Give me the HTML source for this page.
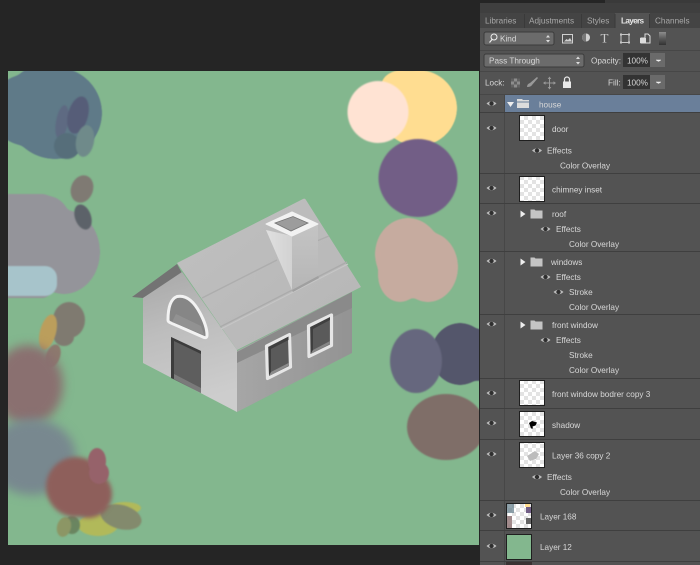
<!DOCTYPE html>
<html><head><meta charset="utf-8"><style>
html,body{margin:0;padding:0;background:#252525;width:700px;height:565px;overflow:hidden}
svg{display:block}
text{font-family:"Liberation Sans",sans-serif;font-size:8.2px;fill:#d8d8d8;filter:blur(.3px)}
</style></head><body>
<svg width="700" height="565" viewBox="0 0 700 565" xmlns="http://www.w3.org/2000/svg">
<defs>
<filter id="g" x="-20%" y="-20%" width="140%" height="140%" color-interpolation-filters="sRGB"><feGaussianBlur stdDeviation="2.500"/><feComponentTransfer><feFuncA type="linear" slope="20" intercept="-9.500"/></feComponentTransfer><feGaussianBlur stdDeviation=".5"/></filter>
<filter id="s" x="-30%" y="-30%" width="160%" height="160%" color-interpolation-filters="sRGB"><feGaussianBlur stdDeviation=".7"/></filter>
<filter id="b5" x="-40%" y="-40%" width="180%" height="180%" color-interpolation-filters="sRGB"><feGaussianBlur stdDeviation="5"/></filter>
<filter id="b2" x="-30%" y="-30%" width="160%" height="160%" color-interpolation-filters="sRGB"><feGaussianBlur stdDeviation="2.200"/></filter>
<filter id="t" color-interpolation-filters="sRGB"><feGaussianBlur stdDeviation="0.35"/></filter>
<clipPath id="c"><rect x="8" y="71" width="471" height="474"/></clipPath>
<pattern id="ck" width="8" height="8" patternUnits="userSpaceOnUse"><rect width="8" height="8" fill="#fff"/><rect width="4" height="4" fill="#e3e3e3"/><rect x="4" y="4" width="4" height="4" fill="#e3e3e3"/></pattern>
<linearGradient id="gw" x1="0" y1="0" x2="0.2" y2="1"><stop offset="0" stop-color="#a8a8a8"/><stop offset=".45" stop-color="#bdbdbd"/><stop offset="1" stop-color="#cdcdcd"/></linearGradient>
<linearGradient id="rw" x1="0" y1="0" x2="1" y2="0"><stop offset="0" stop-color="#a6a6a6"/><stop offset="1" stop-color="#939393"/></linearGradient>
<linearGradient id="rf" x1="0" y1="0" x2="1" y2="1"><stop offset="0" stop-color="#c0c0c0"/><stop offset="1" stop-color="#b6b6b6"/></linearGradient>
<linearGradient id="ch" x1="0" y1="0" x2="1" y2="0"><stop offset="0" stop-color="#e0e0e0"/><stop offset="1" stop-color="#d2d2d2"/></linearGradient>
<linearGradient id="ch2" x1="0" y1="0" x2="0" y2="1"><stop offset="0" stop-color="#c4c4c4"/><stop offset="1" stop-color="#b6b6b6"/></linearGradient>
<linearGradient id="sl" x1="0" y1="0" x2="0" y2="1"><stop offset="0" stop-color="#8d8d8d"/><stop offset=".5" stop-color="#5a5a5a"/><stop offset="1" stop-color="#333"/></linearGradient>
</defs>
<rect width="700" height="565" fill="#252525"/>
<rect x="8" y="71" width="471" height="474" fill="#83b78e"/>
<g clip-path="url(#c)">
<!-- upper left -->
<g filter="url(#g)" fill="#5f7a88"><ellipse cx="55" cy="113" rx="47" ry="46"/><ellipse cx="48" cy="90" rx="36" ry="26"/><ellipse cx="28" cy="110" rx="38" ry="36"/></g>
<g filter="url(#g)" fill="#94949a"><rect x="-30" y="194" width="80" height="104" rx="6"/><ellipse cx="64" cy="252" rx="36" ry="42"/><ellipse cx="48" cy="228" rx="24" ry="32"/></g>
<g filter="url(#s)">
<ellipse cx="62" cy="122" rx="6" ry="17" transform="rotate(10 62 122)" fill="#5e6a82"/>
<ellipse cx="67" cy="146" rx="13" ry="13" fill="#566e7a"/>
<ellipse cx="78" cy="115" rx="10" ry="19" transform="rotate(15 78 115)" fill="#565d78"/>
<ellipse cx="85" cy="141" rx="9" ry="16" transform="rotate(10 85 141)" fill="#6f8a8a"/>
<ellipse cx="82" cy="189" rx="11" ry="14" transform="rotate(20 82 189)" fill="#7f7a73"/>
<ellipse cx="83" cy="217" rx="8" ry="13" transform="rotate(-20 83 217)" fill="#5c6269"/>
</g>
<rect x="-30" y="266" width="87" height="30" rx="12" fill="#a7c4cb" filter="url(#s)"/>
<!-- right -->
<g filter="url(#g)" fill="#ffdd91"><ellipse cx="418" cy="108" rx="39" ry="38"/><ellipse cx="402" cy="86" rx="21" ry="16"/></g>
<ellipse cx="378" cy="112" rx="30.500" ry="31" fill="#ffe3d3" filter="url(#s)"/>
<ellipse cx="418" cy="178" rx="39.500" ry="39" fill="#725e86" filter="url(#s)"/>
<g filter="url(#g)" fill="#c6ab9f"><ellipse cx="408" cy="254" rx="33" ry="36"/><ellipse cx="428" cy="267" rx="30" ry="35"/><ellipse cx="400" cy="275" rx="22" ry="27"/></g>
<g filter="url(#g)" fill="#54566b"><ellipse cx="460" cy="354" rx="29" ry="31"/><ellipse cx="480" cy="355" rx="20" ry="26"/></g>
<ellipse cx="416" cy="361" rx="26" ry="32" fill="#66677e" filter="url(#s)"/>
<ellipse cx="446" cy="427" rx="39" ry="33" fill="#7f6e68" filter="url(#s)"/>
<!-- lower left -->
<g filter="url(#s)">
<ellipse cx="69" cy="320" rx="16" ry="18" fill="#7f7a70"/><ellipse cx="64" cy="337" rx="10" ry="9" fill="#7f7a70"/>
<ellipse cx="48" cy="332" rx="8" ry="18" transform="rotate(15 48 332)" fill="#bb9e5c"/>
<ellipse cx="53" cy="356" rx="7" ry="12" transform="rotate(20 53 356)" fill="#8d7a6e"/>
</g>
<ellipse cx="28" cy="385" rx="35" ry="40" fill="#8a7070" filter="url(#b5)"/>
<ellipse cx="32" cy="457" rx="44" ry="38" fill="#78888f" filter="url(#b5)"/>
<g filter="url(#s)">
<ellipse cx="98" cy="525" rx="20" ry="11" fill="#b1b95a"/><ellipse cx="125" cy="508" rx="16" ry="6" fill="#b1b95a"/>
<ellipse cx="121" cy="517" rx="21" ry="12" transform="rotate(15 121 517)" fill="#838a6d"/>
<ellipse cx="72" cy="525" rx="8" ry="9" fill="#6a8560"/>
<ellipse cx="64" cy="527" rx="7" ry="10" transform="rotate(15 64 527)" fill="#8c9665"/>
</g>
<g filter="url(#b2)" fill="#8e5f5b"><ellipse cx="76" cy="487" rx="30" ry="30"/><ellipse cx="88" cy="494" rx="24" ry="24"/></g>
<g filter="url(#s)" fill="#96626a"><ellipse cx="97" cy="461" rx="9" ry="13"/><ellipse cx="99" cy="473" rx="10" ry="11"/></g>
</g>

<!-- house -->
<g filter="url(#t)">
<path d="M132 297 L177 264 L182 273 L143 298Z" fill="#737373"/>
<path d="M143 298 L182 272 L237 350 L237 412 L143 363Z" fill="url(#gw)"/>
<path d="M237 351 L352 292 L352 353 L237 412Z" fill="url(#rw)"/>
<path d="M237 352 L352 292 L352 308 L237 363Z" fill="#8a8a8a"/>
<path d="M177 263 L303 199 Q305 198 306 200 L361 287 L237 350Z" fill="url(#rf)"/>
<path d="M202 298 L277 260 M312 243 L329 236" stroke="#adadad" stroke-width="1.400" fill="none"/>
<path d="M220 327 L347 262" stroke="#ababab" stroke-width="1.400" fill="none"/>
<path d="M221 329 L348 264" stroke="#c6c6c6" stroke-width="1" fill="none"/>
<path d="M266 230 L292 236 L292 290 Z" fill="url(#ch)"/>
<path d="M292 236 L318 224 L318 276 L292 290Z" fill="url(#ch2)"/>
<path d="M292 290 L318 276 L319 278 L293 292Z" fill="#a0a0a0"/>
<path d="M266 224 L292 212 L318 224 L292 236Z" fill="#f2f2f2" stroke="#f2f2f2" stroke-linejoin="round"/>
<path d="M275 223 L293 216.500 L308 223 L291 231Z" fill="#9c9c9c" stroke="#757575" stroke-width=".8"/>
<path d="M168 320 Q168 300 177 296.500 Q190 294 200 313 Q207 326 207 335 Q207 339 203 337 L171 323 Q168 322 168 320Z" fill="#868686" stroke="#f2f2f2" stroke-width="3" stroke-linejoin="round"/>
<path d="M172 322 L176 314 L201 326 L204 335Z" fill="#929292"/>
<path d="M171 337 L201 351 L201 393 L171 378Z" fill="#5e5e5e"/>
<path d="M171 337 L201 351 L201 354 L174 341 L174 379 L171 378Z" fill="#3c3c3c"/>
<path d="M174 374 L201 388 L201 393 L174 379Z" fill="#7a7a7a"/>
<path d="M266.500 346 L289.500 334.500 L290.500 367 L267.500 378.500Z" fill="#5a5a5a" stroke="#e6e6e6" stroke-width="3.200" stroke-linejoin="round"/>
<path d="M268.500 347 L288.500 336.500 L288.500 340 L271 349 L271 373 L269 375Z" fill="#3f3f3f"/>
<path d="M271 372 L288.500 363 L289 365.500 L269 376Z" fill="#8c8c8c"/>
<path d="M308.500 326 L331.500 315 L331.500 345.500 L309 356.500Z" fill="#5a5a5a" stroke="#e6e6e6" stroke-width="3.200" stroke-linejoin="round"/>
<path d="M310.500 327 L330 317 L330 320 L313 329 L313 352 L310.500 354Z" fill="#3f3f3f"/>
<path d="M313 350 L330 341 L330 344 L310.500 354Z" fill="#868686"/>
</g>

<!-- panel -->
<rect x="480" y="3" width="220" height="562" fill="#535353"/>
<rect x="480" y="3" width="220" height="10" fill="#3f3f3f"/>
<rect x="605" y="0" width="95" height="3" fill="#3a3a3a"/>
<rect x="480" y="13" width="220" height="15" fill="#444"/>
<rect x="615" y="13" width="35" height="15" fill="#535353"/>
<g stroke="#3a3a3a" stroke-width="1"><path d="M524.500 14V28M581.500 14V28M615 14V28M649.500 14V28"/></g>
<path d="M480 50.500H700M480 71.500H700M480 94.500H700" stroke="#474747"/>
<text x="485" y="23.500" style="fill:#a9a9a9">Libraries</text>
<text x="529" y="23.500" style="fill:#a9a9a9">Adjustments</text>
<text x="587" y="23.500" style="fill:#a9a9a9">Styles</text>
<text x="621" y="23.500" font-weight="bold" style="fill:#e6e6e6" textLength="23">Layers</text>
<text x="655" y="23.500" style="fill:#a9a9a9">Channels</text>
<!-- filter row -->
<rect x="484" y="32" width="70" height="13" rx="2" fill="#6b6b6b" stroke="#3b3b3b"/>
<circle cx="494" cy="37" r="3" fill="none" stroke="#eee" stroke-width="1"/><path d="M492 39.500L489.500 42.500" stroke="#eee" stroke-width="1.200"/>
<text x="500" y="41.500">Kind</text>
<path d="M546 37.500l2-2.500 2 2.500zM546 40l2 2.500 2-2.500z" fill="#ddd"/>
<rect x="562.500" y="34.500" width="10" height="8.500" fill="none" stroke="#d0d0d0"/><path d="M564 41.500l2.500-2.500 1.500 1 2-2 2 3.500z" fill="#d0d0d0"/>
<circle cx="586" cy="37.500" r="4" fill="#d0d0d0"/><path d="M586 41.500a4 4 0 0 1 0-8z" fill="#777"/>
<text x="600.500" y="42.500" style="font-family:'Liberation Serif',serif;font-size:13px;fill:#ccc">T</text>
<rect x="621" y="34.500" width="8" height="8" fill="none" stroke="#c8c8c8"/><path d="M620 33.500h2v2h-2zM628 33.500h2v2h-2zM620 41.500h2v2h-2zM628 41.500h2v2h-2z" fill="#c8c8c8"/>
<path d="M641 38h4v-4h3l2 2v7h-9z" fill="none" stroke="#ddd"/><rect x="640" y="38" width="6" height="5" fill="#ddd"/>
<rect x="659" y="32" width="7" height="13" fill="url(#sl)"/>
<!-- blend row -->
<rect x="484" y="54" width="100" height="13" rx="2" fill="#6b6b6b" stroke="#3b3b3b"/>
<text x="489" y="63.500">Pass Through</text>
<path d="M576 59l2-2.500 2 2.500zM576 62l2 2.500 2-2.500z" fill="#ddd"/>
<text x="591" y="63.500">Opacity:</text>
<rect x="623" y="53" width="27" height="14" fill="#333"/><rect x="650" y="53" width="15" height="14" fill="#6a6a6a"/>
<text x="627" y="63.500">100%</text><path d="M656 60h5l-2.500 1.500z" fill="#eee" stroke="#eee" stroke-width=".5"/>
<!-- lock row -->
<text x="485" y="85.500">Lock:</text>
<rect x="511" y="78.500" width="9" height="9" fill="#8c8c8c"/><path d="M511 78.500h3v3h-3zM517 78.500h3v3h-3zM514 81.500h3v3h-3zM511 84.500h3v3h-3zM517 84.500h3v3h-3z" fill="#626262"/>
<path d="M527 87q0-3 3-4l7-6 1 1-6 7q-1 2-5 2z" fill="#999"/>
<path d="M549.500 78v10M544.500 83h10" stroke="#999"/><path d="M549.500 76.500l1.800 2.500h-3.600zM549.500 89.500l1.800-2.500h-3.600zM543 83l2.500-1.800v3.600zM556 83l-2.500-1.800v3.600z" fill="#999"/>
<rect x="563" y="81.500" width="8" height="6.500" fill="#e8e8e8"/><path d="M564.500 82v-2.500a2.500 2.500 0 0 1 5 0V82" fill="none" stroke="#e8e8e8" stroke-width="1.200"/>
<text x="608" y="85.500">Fill:</text>
<rect x="623" y="75" width="27" height="14" fill="#333"/><rect x="650" y="75" width="15" height="14" fill="#6a6a6a"/>
<text x="627" y="85.500">100%</text><path d="M656 82h5l-2.500 1.500z" fill="#eee" stroke="#eee" stroke-width=".5"/>

<!-- layers -->
<rect x="504" y="95" width="196" height="17" fill="#6a7f9a"/>
<path d="M504.500 95V565" stroke="#474747"/>
<path d="M480 112.500H700M480 173.500H700M480 203.500H700M480 251.500H700M480 314.500H700M480 378.500H700M480 408.500H700M480 439.500H700M480 500.500H700M480 530.500H700M480 561.500H700" stroke="#3f3f3f"/>
<!-- eyes -->
<defs><g id="eye"><path d="M-5 0Q0-4.500 5 0Q0 4.500-5 0Z" fill="#bdbdbd"/><circle r="2.200" fill="#2f2f2f"/></g></defs>
<use href="#eye" x="491.500" y="103.500"/><use href="#eye" x="491.500" y="128"/><use href="#eye" x="491.500" y="188"/><use href="#eye" x="491.500" y="213"/><use href="#eye" x="491.500" y="261"/><use href="#eye" x="491.500" y="324"/><use href="#eye" x="491.500" y="393"/><use href="#eye" x="491.500" y="423"/><use href="#eye" x="491.500" y="454"/><use href="#eye" x="491.500" y="515"/><use href="#eye" x="491.500" y="546"/>
<use href="#eye" x="537" y="150.500"/><use href="#eye" x="545.500" y="229"/><use href="#eye" x="545.500" y="277"/><use href="#eye" x="558.500" y="292"/><use href="#eye" x="545.500" y="340"/><use href="#eye" x="537" y="477"/>
<!-- house folder -->
<path d="M507 102h7l-3.500 5z" fill="#eee"/>
<path d="M517 101v-2h5l1 1h6v8h-12z" fill="#dcdcdc"/><path d="M517 102h12" stroke="#6a7f9a"/>
<text x="539" y="107.500">house</text>
<!-- thumbs -->
<g stroke="#1f1f1f">
<rect x="519.500" y="115.500" width="25" height="25" fill="url(#ck)"/>
<rect x="519.500" y="176.500" width="25" height="25" fill="url(#ck)"/>
<rect x="519.500" y="380.500" width="25" height="25" fill="url(#ck)"/>
<rect x="519.500" y="411.500" width="25" height="25" fill="url(#ck)"/>
<rect x="519.500" y="442.500" width="25" height="25" fill="url(#ck)"/>
<rect x="506.500" y="503.500" width="25" height="25" fill="url(#ck)"/>
<rect x="506.500" y="534.500" width="25" height="25" fill="#83b78e"/>
</g>
<path d="M529 423l3-2 5 1.500-1.500 3-3 1 .5 2-2 0-1-3z" fill="#000"/>
<path d="M527 456l8-5 4 3-3 5-6 2z" fill="#bcbcbc"/>
<g filter="url(#t)"><path d="M507 504h7v9h-7z" fill="#5f7a88" opacity=".7"/><path d="M507 516h5v12h-5z" fill="#8c6f70" opacity=".8"/><path d="M525 504h5v3h-5z" fill="#ffdd91"/><path d="M526 507h5v6h-5z" fill="#725e86"/><path d="M526 518h5v6h-5z" fill="#666"/></g>
<!-- group folders -->
<defs><g id="fo"><path d="M0-3l5 3.500-5 3.500z" fill="#eee" transform="translate(-10 0)"/><path d="M0-4h4l1 1h7v8H0z" fill="#c4c4c4"/></g></defs>
<use href="#fo" x="530.500" y="213.500"/><use href="#fo" x="530.500" y="261.500"/><use href="#fo" x="530.500" y="324.500"/>
<text x="552" y="132">door</text>
<text x="547" y="153.500">Effects</text>
<text x="560" y="168.500">Color Overlay</text>
<text x="552" y="192.500">chimney inset</text>
<text x="552" y="217">roof</text>
<text x="556" y="232">Effects</text>
<text x="569" y="247">Color Overlay</text>
<text x="551" y="265">windows</text>
<text x="556" y="280">Effects</text>
<text x="569" y="295">Stroke</text>
<text x="569" y="310">Color Overlay</text>
<text x="552" y="328">front window</text>
<text x="556" y="343">Effects</text>
<text x="569" y="358">Stroke</text>
<text x="569" y="373">Color Overlay</text>
<text x="552" y="397">front window bodrer copy 3</text>
<text x="552" y="428">shadow</text>
<text x="552" y="458.500">Layer 36 copy 2</text>
<text x="547" y="480">Effects</text>
<text x="560" y="495">Color Overlay</text>
<text x="540" y="519.500">Layer 168</text>
<text x="540" y="550">Layer 12</text>
<rect x="506" y="562" width="26" height="3" fill="#3a3232"/>
</svg>
</body></html>
